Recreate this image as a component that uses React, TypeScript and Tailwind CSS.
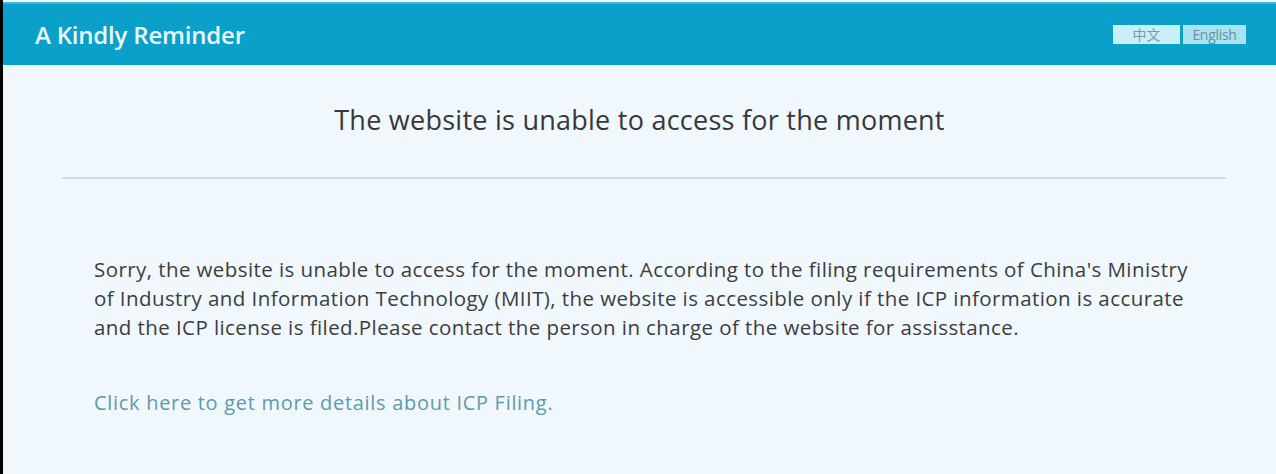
import { useState } from 'react';

const App = () => {
  const [lang, setLang] = useState<'zh' | 'en'>('en');

  return (
    <div
      className="h-[474px] w-[1276px] flex flex-col overflow-hidden bg-black pl-[3px]"
      style={{ fontFamily: '"Open Sans", "Noto Sans CJK SC", sans-serif' }}
    >
      <div className="flex-1 flex flex-col bg-[#f0f7fd]">
        <header className="h-[63px] mt-[2px] bg-[#0aa0c9] border-t-2 border-[#3cb4d6] flex items-center justify-between pl-[32px] pr-[30px]">
          <h1 className="text-[24px] font-semibold text-[#eaf9fd] tracking-[-0.2px]">A Kindly Reminder</h1>
          <div className="flex items-center gap-[3px] text-[14px] leading-[19px]">
            <button
              onClick={() => setLang('zh')}
              className="w-[67px] h-[19px] bg-[#c9eff9] text-[#7a9aa6] text-center"
            >
              中文
            </button>
            <button
              onClick={() => setLang('en')}
              className="w-[63px] h-[19px] bg-[#a9e3f3] text-[#6d8e9a] text-center tracking-[-0.3px]"
            >
              English
            </button>
          </div>
        </header>
        <main className="flex-1 flex flex-col">
          <h2 className="pt-[36px] h-[112px] text-center text-[27px] leading-[38px] text-[#383838] tracking-[0.25px]">
            The website is unable to access for the moment
          </h2>
          <div className="ml-[59px] mr-[50px] h-[2px] bg-[#d3dee6]" />
          <div className="pl-[91px] pr-[68px] pt-[76px] text-[20.5px] leading-[29px] text-[#3d3d3d] tracking-[0.42px]">
            <p>
              Sorry, the website is unable to access for the moment. According to the filing requirements of China's
              Ministry of Industry and Information Technology (MIIT), the website is accessible only if the ICP information
              is accurate and the ICP license is filed.Please contact the person in charge of the website for
              assisstance.
            </p>
            <a href="#" className="block mt-[46px] text-[20px] text-[#5e9ba8] tracking-[0.7px]">
              {lang === 'en' ? 'Click here to get more details about ICP Filing.' : 'Click here to get more details about ICP Filing.'}
            </a>
          </div>
        </main>
      </div>
    </div>
  );
};

export default App;
